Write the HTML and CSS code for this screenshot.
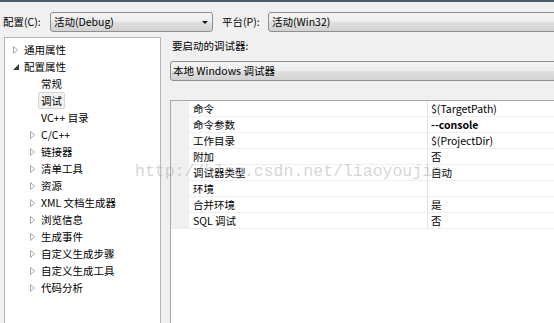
FILE: index.html
```html
<!DOCTYPE html>
<html lang="zh-CN">

<head>
    <meta charset="UTF-8">
    <title>调试 属性页</title>
    <link rel="stylesheet" href="styles.css">
</head>

<body>
<div class="topbar"></div>

<div class="config-row">
    <span class="config-label">配置(C):</span>
    <div class="combo combo-config">
        <span>活动(Debug)</span>
        <span class="combo-arrow"></span>
    </div>
    <span class="config-label platform-label">平台(P):</span>
    <div class="combo combo-platform">
        <span>活动(Win32)</span>
    </div>
</div>

<main class="main">
    <!-- property tree -->
    <div class="tree">
        <div class="tree-item lvl0"><span class="arrow"><svg width="5" height="8"><path d="M0.5 0.5 L4.5 4 L0.5 7.5 Z" fill="none" stroke="#a8a8a8"/></svg></span>通用属性</div>
        <div class="tree-item lvl0"><span class="arrow"><svg width="6" height="6"><path d="M6 0 L6 6 L0 6 Z" fill="#3a3a3a"/></svg></span>配置属性</div>
        <div class="tree-item lvl1"><span class="arrow"></span>常规</div>
        <div class="tree-item lvl1"><span class="arrow"></span><span class="selected">调试</span></div>
        <div class="tree-item lvl1"><span class="arrow"></span>VC++ 目录</div>
        <div class="tree-item lvl1"><span class="arrow"><svg width="5" height="8"><path d="M0.5 0.5 L4.5 4 L0.5 7.5 Z" fill="none" stroke="#a8a8a8"/></svg></span>C/C++</div>
        <div class="tree-item lvl1"><span class="arrow"><svg width="5" height="8"><path d="M0.5 0.5 L4.5 4 L0.5 7.5 Z" fill="none" stroke="#a8a8a8"/></svg></span>链接器</div>
        <div class="tree-item lvl1"><span class="arrow"><svg width="5" height="8"><path d="M0.5 0.5 L4.5 4 L0.5 7.5 Z" fill="none" stroke="#a8a8a8"/></svg></span>清单工具</div>
        <div class="tree-item lvl1"><span class="arrow"><svg width="5" height="8"><path d="M0.5 0.5 L4.5 4 L0.5 7.5 Z" fill="none" stroke="#a8a8a8"/></svg></span>资源</div>
        <div class="tree-item lvl1"><span class="arrow"><svg width="5" height="8"><path d="M0.5 0.5 L4.5 4 L0.5 7.5 Z" fill="none" stroke="#a8a8a8"/></svg></span>XML 文档生成器</div>
        <div class="tree-item lvl1"><span class="arrow"><svg width="5" height="8"><path d="M0.5 0.5 L4.5 4 L0.5 7.5 Z" fill="none" stroke="#a8a8a8"/></svg></span>浏览信息</div>
        <div class="tree-item lvl1"><span class="arrow"><svg width="5" height="8"><path d="M0.5 0.5 L4.5 4 L0.5 7.5 Z" fill="none" stroke="#a8a8a8"/></svg></span>生成事件</div>
        <div class="tree-item lvl1"><span class="arrow"><svg width="5" height="8"><path d="M0.5 0.5 L4.5 4 L0.5 7.5 Z" fill="none" stroke="#a8a8a8"/></svg></span>自定义生成步骤</div>
        <div class="tree-item lvl1"><span class="arrow"><svg width="5" height="8"><path d="M0.5 0.5 L4.5 4 L0.5 7.5 Z" fill="none" stroke="#a8a8a8"/></svg></span>自定义生成工具</div>
        <div class="tree-item lvl1"><span class="arrow"><svg width="5" height="8"><path d="M0.5 0.5 L4.5 4 L0.5 7.5 Z" fill="none" stroke="#a8a8a8"/></svg></span>代码分析</div>
    </div>

    <!-- debugger settings -->
    <div class="content">
        <div class="content-label">要启动的调试器:</div>
        <div class="combo combo-debugger">
            <span>本地 Windows 调试器</span>
        </div>

        <div class="grid">
            <div class="grid-row">
                <div class="margin-cell"></div>
                <div class="name-cell">命令</div>
                <div class="value-cell">$(TargetPath)</div>
            </div>
            <div class="grid-row">
                <div class="margin-cell"></div>
                <div class="name-cell">命令参数</div>
                <div class="value-cell bold">--console</div>
            </div>
            <div class="grid-row">
                <div class="margin-cell"></div>
                <div class="name-cell">工作目录</div>
                <div class="value-cell">$(ProjectDir)</div>
            </div>
            <div class="grid-row">
                <div class="margin-cell"></div>
                <div class="name-cell">附加</div>
                <div class="value-cell">否</div>
            </div>
            <div class="grid-row">
                <div class="margin-cell"></div>
                <div class="name-cell">调试器类型</div>
                <div class="value-cell">自动</div>
            </div>
            <div class="grid-row">
                <div class="margin-cell"></div>
                <div class="name-cell">环境</div>
                <div class="value-cell"></div>
            </div>
            <div class="grid-row">
                <div class="margin-cell"></div>
                <div class="name-cell">合并环境</div>
                <div class="value-cell">是</div>
            </div>
            <div class="grid-row">
                <div class="margin-cell"></div>
                <div class="name-cell">SQL 调试</div>
                <div class="value-cell">否</div>
            </div>
        </div>
    </div>
</main>

<div class="watermark">http://blog.csdn.net/liaoyoujin</div>
</body>

</html>
```

FILE: styles.css
```css
body {
    font-family: "Noto Sans CJK SC", sans-serif;
    font-size: 10.5px;
    color: #000;
    margin: 0;
    padding: 0;
    background-color: #f0f0f0;
    width: 554px;
    height: 323px;
    overflow: hidden;
    position: relative;
}

.topbar {
    height: 2px;
    background-color: #4f5968;
}

.config-row {
    display: flex;
    align-items: center;
    padding: 10px 0 0 3px;
    height: 20px;
}

.config-label {
    width: 47px;
    flex-shrink: 0;
    white-space: nowrap;
    line-height: 20px;
}

.platform-label {
    width: 46px;
}

.combo {
    box-sizing: border-box;
    height: 20px;
    border: 1px solid #8e8f8f;
    border-radius: 3px;
    background: linear-gradient(#f4f4f4 0%, #ececec 50%, #dfdfdf 52%, #d2d2d2 100%);
    display: flex;
    align-items: center;
    padding-left: 3px;
    line-height: 18px;
    white-space: nowrap;
}

.combo-config {
    width: 163px;
    flex-shrink: 0;
    margin-right: 9px;
    position: relative;
}

.combo-arrow {
    position: absolute;
    right: 4px;
    top: 8px;
    border-left: 3px solid transparent;
    border-right: 3px solid transparent;
    border-top: 3px solid #111;
}

.combo-platform {
    width: 320px;
    flex-shrink: 0;
}

.main {
    display: flex;
    margin-top: 5px;
    gap: 9px;
}

.tree {
    box-sizing: border-box;
    width: 157px;
    height: 290px;
    margin-left: 4px;
    background-color: #fff;
    border: 1px solid #b5b5b5;
    padding-top: 3px;
    flex-shrink: 0;
}

.tree-item {
    display: flex;
    align-items: center;
    height: 17px;
    white-space: nowrap;
}

.tree-item.lvl0 {
    padding-left: 8px;
}

.tree-item.lvl1 {
    padding-left: 25px;
}

.arrow {
    width: 11px;
    display: flex;
    align-items: center;
}

.selected {
    margin-left: -3px;
    padding: 0 2px;
    line-height: 15px;
    border: 1px solid #d4d4d4;
    border-radius: 2px;
    background-color: #f1f1f1;
}

.content {
    flex-shrink: 0;
    width: 420px;
}

.content-label {
    line-height: 16px;
    margin-top: 1px;
    padding-left: 2px;
}

.combo-debugger {
    margin-top: 7px;
    padding-left: 2px;
}

.grid {
    margin-top: 19px;
    height: 230px;
    background-color: #fff;
    border-top: 1px solid #a9a9a9;
    border-left: 1px solid #a9a9a9;
}

.grid-row {
    display: flex;
    height: 16px;
    border-bottom: 1px solid #efefef;
    box-sizing: border-box;
}

.margin-cell {
    width: 18px;
    background-color: #f0f0f0;
}

.name-cell {
    width: 234px;
    padding-left: 4px;
    line-height: 15px;
    border-right: 1px solid #e3e3e3;
    white-space: nowrap;
}

.value-cell {
    flex: 1;
    padding-left: 3px;
    line-height: 15px;
    white-space: nowrap;
}

.bold {
    font-weight: bold;
}

.watermark {
    position: absolute;
    left: 135px;
    top: 162px;
    font-family: "Liberation Mono", monospace;
    font-size: 16.5px;
    color: rgba(160, 160, 160, 0.45);
    white-space: nowrap;
    pointer-events: none;
}
```
